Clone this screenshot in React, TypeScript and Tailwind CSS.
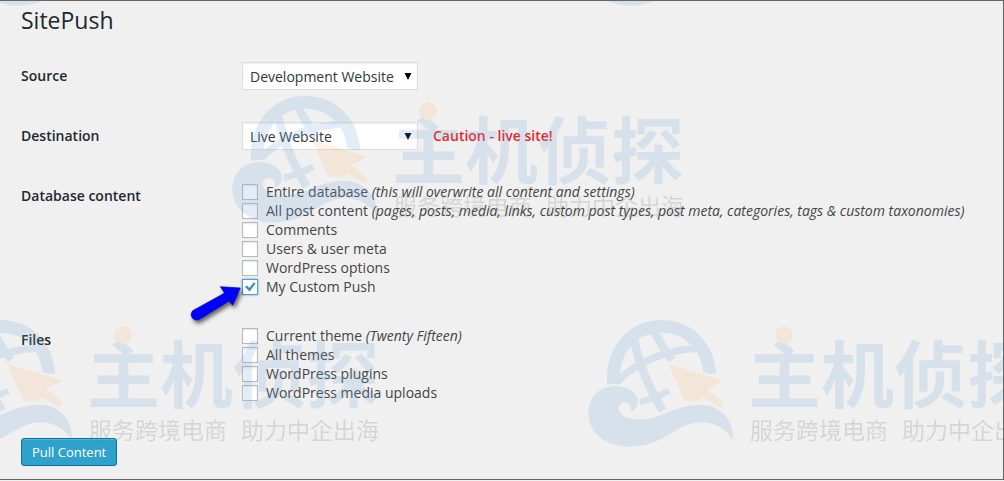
import { useId, type ReactNode } from 'react'

type Option = {
  id: string
  name: string
  note?: string
  checked?: boolean
}

const databaseOptions: Option[] = [
  { id: 'db-all', name: 'Entire database', note: '(this will overwrite all content and settings)' },
  {
    id: 'db-posts',
    name: 'All post content',
    note: '(pages, posts, media, links, custom post types, post meta, categories, tags & custom taxonomies)',
  },
  { id: 'db-comments', name: 'Comments' },
  { id: 'db-users', name: 'Users & user meta' },
  { id: 'db-options', name: 'WordPress options' },
  { id: 'db-custom', name: 'My Custom Push', checked: true },
]

const fileOptions: Option[] = [
  { id: 'files-theme', name: 'Current theme', note: '(Twenty Fifteen)' },
  { id: 'files-themes', name: 'All themes' },
  { id: 'files-plugins', name: 'WordPress plugins' },
  { id: 'files-uploads', name: 'WordPress media uploads' },
]

const wave =
  'M25 310C25 260 60 228 105 228C150 228 178 255 173 282C170 296 160 303 150 304C158 292 150 277 135 277C122 277 113 290 118 302C126 322 155 332 190 328C250 322 290 284 360 284C420 284 465 330 458 392C440 355 400 335 360 337C290 340 250 410 150 410C80 410 25 370 25 310Z'
const cursor = 'M265 162L430 212L382 238L432 278L422 293L368 262L360 272L313 272Z'

function Watermark({ className, markOnly = false }: { className: string; markOnly?: boolean }) {
  const maskId = useId()

  return (
    <svg className={`absolute ${className}`} width="456" height="130" viewBox="0 0 456 130" aria-hidden="true">
      <g opacity="0.2">
        <g transform="translate(-8 -10) scale(0.3333)">
          <mask id={maskId} maskUnits="userSpaceOnUse" x="0" y="0" width="500" height="430">
            <rect width="500" height="430" fill="white" />
            <path d={wave} fill="black" stroke="black" strokeWidth="12" />
            <path d={cursor} fill="black" stroke="black" strokeWidth="14" />
          </mask>
          <g mask={`url(#${maskId})`} fill="none" stroke="#78aadc">
            <path d="M100 225C94 115 160 49 245 49C325 49 383 108 390 192" strokeWidth="38" />
            <path d="M163 92C176 160 205 230 248 302" strokeWidth="26" />
            <path d="M222 62Q245 110 276 150" strokeWidth="25" />
            <path d="M112 215C160 165 245 120 350 115" strokeWidth="22" />
            <path d="M176 277Q225 265 268 242" strokeWidth="20" />
          </g>
          <path d={wave} fill="#78aadc" />
          <path d={cursor} fill="#ffbe78" />
        </g>
        {!markOnly && (
          <>
            <text x="160" y="82" fill="#78aadc" className="font-['Noto_Sans_CJK_SC',sans-serif] text-[73px] font-bold">
              主机侦探
            </text>
            <circle cx="196" cy="15" r="9" fill="#ffbe78" />
            <text x="162" y="119" fill="#6e6e6e" className="font-['Noto_Sans_CJK_SC',sans-serif] text-[23px]">
              服务跨境电商
            </text>
            <text x="314" y="119" fill="#6e6e6e" className="font-['Noto_Sans_CJK_SC',sans-serif] text-[23px]">
              助力中企出海
            </text>
          </>
        )}
      </g>
    </svg>
  )
}

function Select({ id, options }: { id: string; options: string[] }) {
  return (
    <div className="relative w-44">
      <select
        id={id}
        className="block h-7 w-full appearance-none border border-[#ddd] bg-white pt-0.5 pl-[7px] text-sm text-[#32373c] shadow-[inset_0_1px_2px_rgba(0,0,0,0.07)]"
      >
        {options.map((option) => (
          <option key={option}>{option}</option>
        ))}
      </select>
      <svg className="pointer-events-none absolute top-[11px] right-1.5" width="8" height="7" viewBox="0 0 8 7">
        <path d="M0.5 0H7.5L4 7Z" fill="#000" />
      </svg>
    </div>
  )
}

function Checkbox({ option }: { option: Option }) {
  return (
    <div className="flex h-[19px] items-center gap-2">
      <span className="relative block size-4 shrink-0">
        <input
          id={option.id}
          type="checkbox"
          defaultChecked={option.checked}
          className="peer block size-4 appearance-none border border-[#b4b9be] bg-white shadow-[inset_0_1px_2px_rgba(0,0,0,0.1)] checked:border-[#5b9dd9] checked:shadow-[0_0_2px_rgba(30,140,190,0.8)]"
        />
        <svg
          className="pointer-events-none absolute inset-0 hidden peer-checked:block"
          width="16"
          height="16"
          viewBox="0 0 16 16"
        >
          <path d="M3 8L5 6.5L7.3 9L11.8 3.2L13.5 4.4L7.6 12.6Z" fill="#3a8dbd" />
        </svg>
      </span>
      <label htmlFor={option.id} className="whitespace-nowrap">
        {option.name}
        {option.note && <em> {option.note}</em>}
      </label>
    </div>
  )
}

function Row({ label, htmlFor, children }: { label: string; htmlFor?: string; children: ReactNode }) {
  const style = 'w-[221px] shrink-0 pt-1 font-semibold text-[#23282d]'

  return (
    <div className="flex" role={htmlFor ? undefined : 'group'} aria-label={htmlFor ? undefined : label}>
      {htmlFor ? (
        <label htmlFor={htmlFor} className={style}>
          {label}
        </label>
      ) : (
        <span className={style}>{label}</span>
      )}
      {children}
    </div>
  )
}

export default function App() {
  return (
    <div className="flex min-h-screen bg-[#f0f0f0] pb-px font-['Open_Sans',sans-serif] text-sm leading-5 text-[#444]">
      <div className="relative w-full overflow-hidden border-t border-r border-b border-[#666]">
        <main className="px-[21px] pt-[3px]">
          <h1 className="text-[23px] leading-8 text-[#23282d]">SitePush</h1>

          <form className="pt-[26px]" onSubmit={(e) => e.preventDefault()}>
            <div className="flex flex-col gap-8">
              <Row label="Source" htmlFor="source">
                <Select id="source" options={['Development Website', 'Live Website']} />
              </Row>
              <Row label="Destination" htmlFor="destination">
                <Select id="destination" options={['Live Website', 'Development Website']} />
                <strong className="pt-1 pl-[15px] font-semibold text-[#f01c24]">Caution - live site!</strong>
              </Row>
              <Row label="Database content">
                <div className="relative">
                  {databaseOptions.map((option) => (
                    <Checkbox key={option.id} option={option} />
                  ))}
                  <svg
                    className="pointer-events-none absolute bottom-[-28px] left-[-54px] drop-shadow-[2px_3px_2px_rgba(0,0,0,0.6)]"
                    width="56"
                    height="40"
                    viewBox="0 0 168 120"
                  >
                    <path
                      d="M157 12L134 64L123 51L32 107C16 113 2 94 14 80L110 27L97 8Z"
                      fill="#00f"
                      stroke="#0000b4"
                      strokeWidth="2"
                      strokeLinejoin="round"
                    />
                  </svg>
                </div>
              </Row>
            </div>

            <div className="pt-[30px]">
              <Row label="Files">
                <div>
                  {fileOptions.map((option) => (
                    <Checkbox key={option.id} option={option} />
                  ))}
                </div>
              </Row>
            </div>

            <button
              type="submit"
              className="mt-9 block h-7 rounded-[3px] border border-[#0074a2] bg-[#2ea2cc] px-2.5 text-[13px] text-white shadow-[inset_0_1px_0_rgba(120,200,230,0.5)]"
            >
              Pull Content
            </button>
          </form>
        </main>

        <div className="pointer-events-none absolute inset-0 overflow-hidden">
          <Watermark markOnly className="top-[-122px] left-[-24px]" />
          <Watermark markOnly className="top-[-122px] left-[588px]" />
          <Watermark className="top-[95px] left-[232px]" />
          <Watermark className="top-[319px] left-[-73px]" />
          <Watermark className="top-[319px] left-[588px]" />
        </div>
      </div>
    </div>
  )
}
